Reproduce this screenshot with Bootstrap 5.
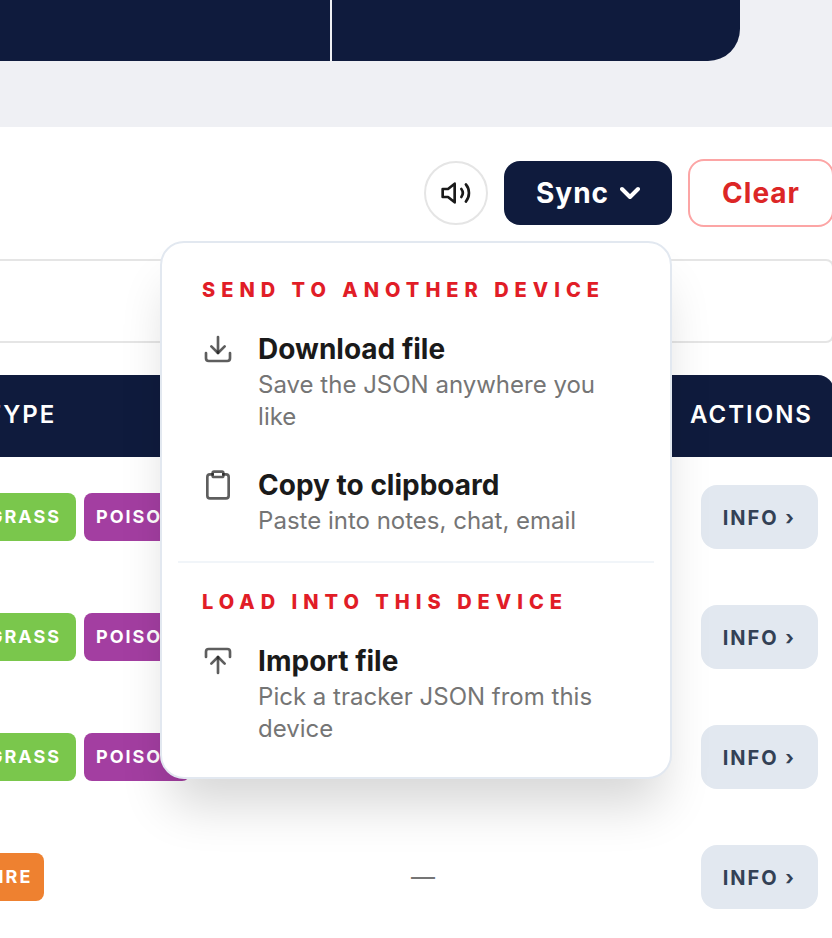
<!DOCTYPE html>
<html lang="en">
<head>
<meta charset="utf-8">
<meta name="viewport" content="width=device-width, initial-scale=1">
<title>Tracker</title>
<link href="https://cdn.jsdelivr.net/npm/bootstrap@5.3.0/dist/css/bootstrap.min.css" rel="stylesheet">
<style>
  :root { --navy: #0f1b3d; --red: #e11d27; --line: #e2e8f0; --ink: #1a1a1a; --muted: #757575; }
  body { font-family: Inter, "Liberation Sans", sans-serif; color: var(--ink); background: #fff; font-size: 24px; overflow: hidden; }
  .page-shell { overflow: hidden; height: 100vh; }
  .hero-band { background: #eff0f4; padding: 0 92px 66px 0; }
  .hero-tiles { gap: 2px; }
  .hero-tile { background: var(--navy); height: 61px; }
  .tile-first { flex: 0 0 330px; }
  .tile-last { border-bottom-right-radius: 32px; }
  .tracker-main { padding-top: 32px; margin: 0 -2px 0 -50px; }
  .tool-row { gap: 16px; margin-bottom: 32px; }
  .tool-btn { font-size: 28px; line-height: 32px; font-weight: 700; border-radius: 16px; letter-spacing: 1px; }
  .btn-sound { width: 64px; height: 64px; border: 2px solid #e5e5e5; color: var(--ink); background: #fff; }
  .btn-sync { --bs-btn-color: #fff; --bs-btn-bg: var(--navy); --bs-btn-hover-color: #fff; --bs-btn-hover-bg: #1b2a57; --bs-btn-active-bg: var(--navy); --bs-btn-active-color: #fff; padding: 16px 32px; border: 0; gap: 11px; }
  .btn-clear { --bs-btn-color: #dc2626; --bs-btn-bg: #fff; --bs-btn-border-color: #fca5a5; --bs-btn-hover-color: #dc2626; --bs-btn-hover-bg: #fef2f2; --bs-btn-hover-border-color: #fca5a5; border-width: 2px; padding: 16px 32px; }
  .stroke-icon { fill: none; stroke: currentColor; stroke-width: 2; stroke-linecap: round; stroke-linejoin: round; flex: none; }
  .search-box { height: 84px; border: 2px solid #e5e5e5; border-radius: 8px; margin-bottom: 32px; }

  .sync-menu { top: 100%; right: 0; margin-top: 16px; width: 512px; padding: 16px; background: #fff; border: 2px solid var(--line); border-radius: 24px; box-shadow: 0 36px 50px -10px rgba(0,0,0,.16); z-index: 10; }
  .menu-label { font-size: 20px; line-height: 22px; font-weight: 800; letter-spacing: 6px; color: var(--red); padding: 20px 24px 16px; white-space: nowrap; }
  .menu-list { gap: 4px; }
  .menu-action { padding: 16px 24px; gap: 24px; border: 0; background: transparent; border-radius: 16px; }
  .menu-action:hover { background: #f8fafc; }
  .menu-action .stroke-icon { color: var(--ink); stroke-opacity: .7; }
  .menu-title { font-size: 28px; line-height: 32px; font-weight: 700; margin-bottom: 4px; color: var(--ink); }
  .menu-note { font-size: 24px; line-height: 32px; color: var(--muted); }
  .menu-rule { height: 2px; background: #f1f5f9; margin: 8px 0; }

  .dex-frame { border-top-right-radius: 16px; overflow: hidden; }
  .dex-table { table-layout: fixed; width: 100%; }
  .dex-table th { background: var(--navy); color: #fff; font-size: 24px; line-height: 34px; font-weight: 600; letter-spacing: 2px; padding: 23px 22px 25px 24px; white-space: nowrap; }
  .dex-table th:first-child { padding-left: 35px; }
  .dex-table td { height: 120px; padding: 0 16px 0 24px; vertical-align: middle; white-space: nowrap; }
  .col-kind { width: 437px; }
  .col-act { width: 168px; }
  .kind-tag { font-size: 18px; line-height: 24px; font-weight: 700; letter-spacing: 2px; color: #fff; padding: 12px; border-radius: 8px; text-align: center; }
  .kind-grass { background: #7ac74c; min-width: 102px; }
  .kind-poison { background: #a33ea1; }
  .kind-fire { background: #ee8130; }
  .dash-text { color: var(--muted); }
  .btn-info-row { --bs-btn-color: #334155; --bs-btn-bg: #e2e8f0; --bs-btn-hover-color: #334155; --bs-btn-hover-bg: #cbd5e1; font-size: 20px; line-height: 24px; font-weight: 700; letter-spacing: 2px; border: 0; border-radius: 16px; padding: 21px 22px 19px; }
</style>
</head>
<body>
<div class="page-shell">
  <header class="hero-band">
    <div class="hero-tiles d-flex">
      <div class="hero-tile tile-first"></div>
      <div class="hero-tile tile-last flex-fill"></div>
    </div>
  </header>

  <main class="tracker-main">
    <div class="tool-row d-flex justify-content-end align-items-center">
      <button type="button" class="btn-sound rounded-circle p-0 d-flex align-items-center justify-content-center" aria-label="Sound">
        <svg class="stroke-icon" width="32" height="32" viewBox="0 0 24 24" aria-hidden="true"><path d="M11 5 6 9H2v6h4l5 4z"/><path d="M16 9a5 5 0 0 1 0 6"/><path d="M19.4 5.6a10 10 0 0 1 0 12.8"/></svg>
      </button>
      <div class="position-relative">
        <button type="button" class="btn btn-sync tool-btn d-flex align-items-center" aria-expanded="true" aria-controls="syncMenu">
          Sync
          <svg class="stroke-icon" width="20" height="20" viewBox="0 0 20 20" aria-hidden="true"><path stroke-width="4" d="m2 6 8 8 8-8"/></svg>
        </button>
        <div class="sync-menu position-absolute" id="syncMenu">
          <div class="menu-label">SEND TO ANOTHER DEVICE</div>
          <div class="menu-list d-flex flex-column">
            <button type="button" class="menu-action d-flex align-items-start text-start">
              <svg class="stroke-icon" width="32" height="32" viewBox="0 0 24 24" aria-hidden="true"><path d="M21 15v4a2 2 0 0 1-2 2H5a2 2 0 0 1-2-2v-4"/><path d="m7 10 5 5 5-5"/><path d="M12 15V3"/></svg>
              <span class="d-flex flex-column"><span class="menu-title">Download file</span><span class="menu-note">Save the JSON anywhere you like</span></span>
            </button>
            <button type="button" class="menu-action d-flex align-items-start text-start">
              <svg class="stroke-icon" width="32" height="32" viewBox="0 0 24 24" aria-hidden="true"><path d="M16 4h2a2 2 0 0 1 2 2v14a2 2 0 0 1-2 2H6a2 2 0 0 1-2-2V6a2 2 0 0 1 2-2h2"/><rect x="8" y="2" width="8" height="4" rx="1"/></svg>
              <span class="d-flex flex-column"><span class="menu-title">Copy to clipboard</span><span class="menu-note">Paste into notes, chat, email</span></span>
            </button>
          </div>
          <div class="menu-rule"></div>
          <div class="menu-label">LOAD INTO THIS DEVICE</div>
          <div class="menu-list d-flex flex-column">
            <button type="button" class="menu-action d-flex align-items-start text-start">
              <svg class="stroke-icon" width="32" height="32" viewBox="0 0 24 24" aria-hidden="true"><path d="M3 9V5a2 2 0 0 1 2-2h14a2 2 0 0 1 2 2v4"/><path d="m7 14 5-5 5 5"/><path d="M12 9v12"/></svg>
              <span class="d-flex flex-column"><span class="menu-title">Import file</span><span class="menu-note">Pick a tracker JSON from this device</span></span>
            </button>
          </div>
        </div>
      </div>
      <button type="button" class="btn btn-clear tool-btn">Clear</button>
    </div>

    <input type="search" class="search-box form-control" aria-label="Search">

    <div class="dex-frame">
      <table class="dex-table">
        <colgroup><col class="col-kind"><col><col class="col-act"></colgroup>
        <thead>
          <tr><th scope="col">TYPE</th><th></th><th scope="col">ACTIONS</th></tr>
        </thead>
        <tbody>
          <tr>
            <td><div class="d-flex gap-2"><span class="kind-tag kind-grass">GRASS</span><span class="kind-tag kind-poison">POISON</span></div></td>
            <td></td>
            <td class="text-end"><button type="button" class="btn btn-info-row">INFO ›</button></td>
          </tr>
          <tr>
            <td><div class="d-flex gap-2"><span class="kind-tag kind-grass">GRASS</span><span class="kind-tag kind-poison">POISON</span></div></td>
            <td></td>
            <td class="text-end"><button type="button" class="btn btn-info-row">INFO ›</button></td>
          </tr>
          <tr>
            <td><div class="d-flex gap-2"><span class="kind-tag kind-grass">GRASS</span><span class="kind-tag kind-poison">POISON</span></div></td>
            <td></td>
            <td class="text-end"><button type="button" class="btn btn-info-row">INFO ›</button></td>
          </tr>
          <tr>
            <td><div class="d-flex gap-2"><span class="kind-tag kind-fire">FIRE</span></div></td>
            <td class="dash-text">—</td>
            <td class="text-end"><button type="button" class="btn btn-info-row">INFO ›</button></td>
          </tr>
        </tbody>
      </table>
    </div>
  </main>
</div>
<script src="https://cdn.jsdelivr.net/npm/bootstrap@5.3.0/dist/js/bootstrap.bundle.min.js"></script>
</body>
</html>
